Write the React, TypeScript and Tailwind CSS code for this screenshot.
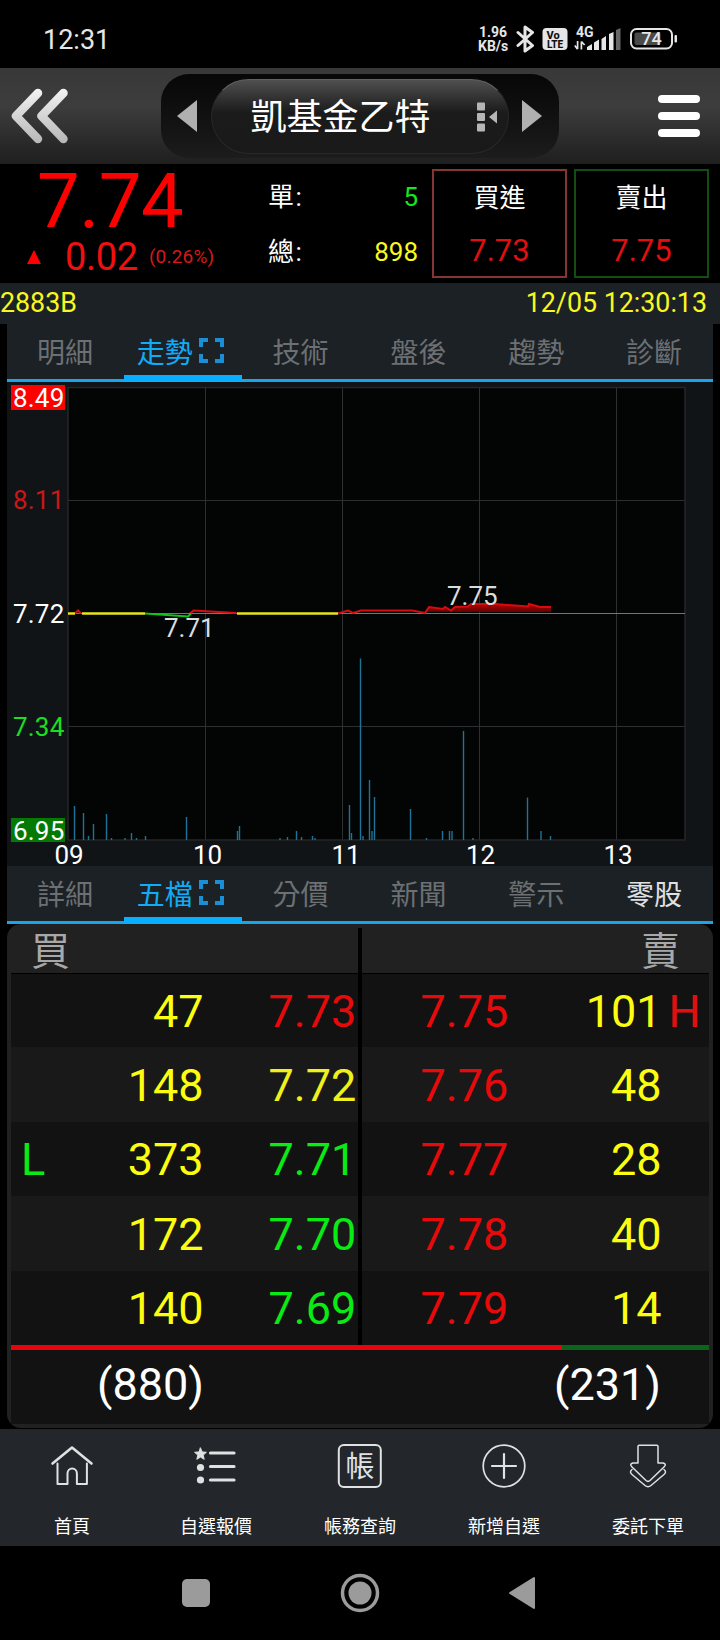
import { ReactNode } from "react";
import clsx from "clsx";

type Level = {
  height: string;
  bidQty: number;
  bid: string;
  bidColor: string;
  askQty: number;
  ask: string;
  low?: boolean;
  high?: boolean;
};

const levels: Level[] = [
  { height: "h-[73px]", bidQty: 47, bid: "7.73", bidColor: "text-[#e80a0a]", askQty: 101, ask: "7.75", high: true },
  { height: "h-[75px]", bidQty: 148, bid: "7.72", bidColor: "text-[#f0f01c]", askQty: 48, ask: "7.76" },
  { height: "h-[74px]", bidQty: 373, bid: "7.71", bidColor: "text-[#0aea14]", askQty: 28, ask: "7.77", low: true },
  { height: "h-[75px]", bidQty: 172, bid: "7.70", bidColor: "text-[#0aea14]", askQty: 40, ask: "7.78" },
  { height: "h-[74px]", bidQty: 140, bid: "7.69", bidColor: "text-[#0aea14]", askQty: 14, ask: "7.79" },
];

// [x, top] of each volume bar, the base line is at 458
const volumes = [
  [67.5, 424], [76.5, 431], [81.5, 454], [86.5, 442], [99.5, 432], [104.5, 456], [118, 456],
  [124.5, 451], [129.5, 456], [138.5, 454], [179.5, 435], [230.5, 449], [232.5, 444],
  [273, 456], [280.5, 455], [289.5, 449], [294.5, 455], [305.5, 454], [308, 456],
  [342.5, 423], [344.5, 451], [353.5, 276.5], [356, 454], [362.5, 398], [365, 449],
  [367.5, 415], [403.5, 427], [419.5, 456], [435.5, 449], [442.5, 449], [445, 449],
  [456.5, 349], [466, 456], [520.5, 415.5], [534, 449], [543.5, 454],
];

const gridX = [198.5, 335.5, 472.5, 609.5];
const gridY = [118.5, 344.5];
const hours = [
  { label: "09", x: 62 },
  { label: "10", x: 200.5 },
  { label: "11", x: 339 },
  { label: "12", x: 473.5 },
  { label: "13", x: 611 },
];

function StatusBar() {
  return (
    <div className="flex h-[68px] justify-between bg-black pl-[43px] pr-[42px] pt-[25px] text-[#e6e6e6]">
      <span className="h-[30px] text-[27px] leading-[30px]">12:31</span>
      <div className="flex">
        <div className="-ml-px w-[30px] whitespace-nowrap text-center text-[14px] font-bold leading-[14px]">
          <div>1.96</div>
          <div>KB/s</div>
        </div>
        <svg className="ml-[8px]" width="20" height="28" viewBox="0 0 20 28" fill="none" stroke="currentColor" strokeWidth="3" strokeLinejoin="round" strokeLinecap="round">
          <path d="M2 7.500l14.500 13-7.500 5.500V2l7.500 5.500L2 20.500" />
        </svg>
        <svg className="ml-[6px]" width="26" height="28" viewBox="0 0 26 28">
          <rect x="0.5" y="3" width="25" height="22" rx="4" fill="currentColor" />
          <text x="4.5" y="13.5" fontSize="11" fontWeight="800" fill="#111">Vo</text>
          <text x="5" y="22.5" fontSize="10" fontWeight="800" fill="#111">LTE</text>
        </svg>
        <svg className="ml-[6px]" width="50" height="28" viewBox="0 0 50 28" fill="currentColor">
          <text x="2" y="12" fontSize="14" fontWeight="700">4G</text>
          <path d="M3.6 16v8M0.8 20.5l2.8 3.8M7.4 24.5v-8M10.6 20l-3.2-3.5" stroke="currentColor" strokeWidth="1.7" />
          <path d="M13 25v-3l5-3v6zM20 25v-7.500l5-3V25zM27.500 25V14l4.500-3v14zM35 25V9l4.500-2v18z" />
          <path d="M42 25V5l4.500-2v22z" fill="#666" />
        </svg>
        <svg className="ml-[6px]" width="48" height="28" viewBox="0 0 48 28">
          <rect x="1" y="4" width="41" height="19.500" rx="5.500" fill="none" stroke="currentColor" strokeWidth="2" />
          <rect x="4.500" y="7.500" width="26" height="12.500" rx="2" fill="#4a4a4a" />
          <rect x="44.500" y="10" width="2.500" height="7.500" rx="1" fill="currentColor" />
          <text x="21.500" y="20.300" fontSize="18" fontWeight="500" textAnchor="middle" fill="currentColor">74</text>
        </svg>
      </div>
    </div>
  );
}

function Header() {
  return (
    <header className="flex h-24 items-center bg-linear-to-b from-[#383838] via-[#3d3d3d] via-40% to-[#1f1f1f] pl-[9px] pr-[20px]">
      <svg width="62" height="60" viewBox="0 0 62 60" fill="none" strokeWidth="8.500" strokeLinecap="round" strokeLinejoin="round">
        <defs>
          <linearGradient id="chevron" gradientUnits="userSpaceOnUse" x1="0" y1="4" x2="0" y2="56">
            <stop offset="0" stopColor="#f2f2f2" />
            <stop offset="1" stopColor="#b8b8b8" />
          </linearGradient>
        </defs>
        <path d="M29 7L7 30l22 23M54.500 7L32.500 30l22 23" stroke="url(#chevron)" />
      </svg>
      <div className="ml-[90px] flex h-[84px] w-[398px] items-center justify-between rounded-[28px] bg-linear-to-b from-[#070707] to-[#1c1c1c] px-4">
        <svg width="20" height="32" viewBox="0 0 20 32" fill="#b0b0b0">
          <path d="M0 16L20 0v32z" />
        </svg>
        <div className="mt-px flex h-[75px] w-[298px] items-center rounded-full border border-[#292929] border-t-[#606060] bg-linear-to-b from-[#505050] via-[#1b1b1b] via-45% to-[#191919] pl-[39px]">
          <h1 className="mt-[3px] whitespace-nowrap text-[36px] leading-[40px] text-white">凱基金乙特</h1>
          <svg className="ml-[46px]" width="21" height="30" viewBox="0 0 21 30" fill="#b5b5b5">
            <rect x="0" y="0.500" width="8" height="8" rx="1" />
            <rect x="0" y="11" width="8" height="8" rx="1" />
            <rect x="0" y="21.500" width="8" height="8" rx="1" />
            <path d="M12 15l8-6.500v13z" />
          </svg>
        </div>
        <svg className="mr-px" width="20" height="32" viewBox="0 0 20 32" fill="#b0b0b0">
          <path d="M20 16L0 0v32z" />
        </svg>
      </div>
      <div className="ml-auto flex w-[42px] flex-col gap-[9px]">
        <span className="h-2 rounded-full bg-white" />
        <span className="h-2 rounded-full bg-white" />
        <span className="h-2 rounded-full bg-white" />
      </div>
    </header>
  );
}

function TradeBox({ label, price, border }: { label: string; price: string; border: string }) {
  return (
    <button className={clsx("flex h-[109px] w-[135px] flex-col items-center border-2 pt-[10px]", border)}>
      <span className="text-[26px] leading-[34px] text-white">{label}</span>
      <span className="mt-[19px] text-[31px] leading-[34px] text-[#e01010]">{price}</span>
    </button>
  );
}

function Quote() {
  return (
    <section className="flex h-[119px] bg-black">
      <div className="w-[268px]">
        <div className="pl-[37px] text-[76px] leading-[74px] tracking-[-0.500px] text-[#fe0000]">7.74</div>
        <div className="flex items-center pl-[27px] leading-[38px] text-[#f01010]">
          <svg width="14" height="14" viewBox="0 0 14 14" fill="#fe0000">
            <path d="M7 0l7 14H0z" />
          </svg>
          <span className="ml-[24px] text-[38px] tracking-[-0.300px]">0.02</span>
          <span className="ml-[11px] text-[19px] tracking-[0.200px] text-[#d81818]">(0.26%)</span>
        </div>
      </div>
      <div className="flex w-[150px] flex-col gap-[21px] pt-[16px] text-[26px] leading-[34px]">
        <div className="flex justify-between">
          <span className="tracking-[1.500px] text-white">單:</span>
          <span className="text-[#14e81c]">5</span>
        </div>
        <div className="flex justify-between">
          <span className="tracking-[1.500px] text-white">總:</span>
          <span className="text-[#f8f820]">898</span>
        </div>
      </div>
      <div className="ml-[14px] flex gap-[7px] pt-[5px]">
        <TradeBox label="買進" price="7.73" border="border-[#863434]" />
        <TradeBox label="賣出" price="7.75" border="border-[#144c14]" />
      </div>
    </section>
  );
}

function ExpandIcon() {
  return (
    <svg width="25" height="25" viewBox="0 0 25 25" fill="none" stroke="#1b8fd6" strokeWidth="4">
      <path d="M2 9V2h7M16 2h7v7M23 16v7h-7M9 23H2v-7" />
    </svg>
  );
}

function Tabs({ items, lit }: { items: string[]; lit?: number }) {
  return (
    <div className="h-[58px] border-b-[3px] border-[#18a5ec] bg-[#1c2125]">
      <div className="-ml-px grid h-[58px] grid-cols-6">
        {items.map((item, i) => (
          <div
            key={item}
            className={clsx(
              "flex items-start justify-center whitespace-nowrap pt-[12px] text-[28px] leading-[36px]",
              i === 1 ? "border-b-[7px] border-[#08aeff] pr-[5px] text-[#10acf8]" : i === lit ? "text-[#e0e0e0]" : "text-[#6c7073]"
            )}
          >
            {item}
            {i === 1 && (
              <span className="ml-[6px] mt-[2px]">
                <ExpandIcon />
              </span>
            )}
          </div>
        ))}
      </div>
    </div>
  );
}

function TrendChart() {
  return (
    <svg className="block overflow-visible bg-[#101417]" width="706" height="484" viewBox="0 0 706 484" fontSize="26">
      <defs>
        <linearGradient id="area" x1="0" y1="0" x2="0" y2="1">
          <stop offset="0" stopColor="#b80000" />
          <stop offset="1" stopColor="#4a0000" />
        </linearGradient>
      </defs>
      <rect x="61" y="5" width="617" height="453.500" fill="#030505" />
      <g stroke="#2d2f30">
        {gridX.map((x) => (
          <path key={x} d={`M${x} 5V458`} />
        ))}
        {gridY.map((y) => (
          <path key={y} d={`M61 ${y}H678`} />
        ))}
      </g>
      <rect x="61" y="5.500" width="617" height="452.500" fill="none" stroke="#242627" strokeWidth="1.500" />
      <path d="M61 231.500H678" stroke="#4f8199" />
      <g stroke="#1f7399" strokeWidth="1.400">
        {volumes.map(([x, y]) => (
          <path key={x} d={`M${x} ${y}V458`} />
        ))}
      </g>

      <path d="M418 231.500l4-6 14 2 2-2 6 3.500 4-3.500 13-0.500 3-2.500h24l33 2.500 1-2.500 11 3h11v4.500H418z" fill="url(#area)" />
      <g fill="none" strokeWidth="2">
        <path d="M68 231.500l3-3 3 3M183 231.500l3.500-3 43 2.500M331 231.500l10-3 5 2.500 8-2.500h51l13 2.500 4-6 14 2 2-2 6 3.500 4-3.500 13-0.500 3-2.500h24l33 2.500 1-2.500 11 3h11" stroke="#d80c10" />
        <path d="M138 231.500l43 3 3-3" stroke="#12c41a" />
        <path d="M61 231.500h7M75 231.500h63M230 231.500h101" stroke="#e8e41c" strokeWidth="2.500" />
      </g>

      <g fill="#dcdcdc">
        <text x="157" y="255">7.71</text>
        <text x="440" y="223">7.75</text>
      </g>

      <rect x="4" y="3" width="54" height="25" fill="#fe0000" />
      <rect x="4" y="436" width="54" height="24" fill="#047a04" />
      <g letterSpacing="0.200">
        <text x="6" y="25" fill="#fff">8.49</text>
        <text x="6" y="127" fill="#c81818">8.11</text>
        <text x="6" y="241" fill="#fff">7.72</text>
        <text x="6" y="354" fill="#18e020">7.34</text>
        <text x="6" y="458" fill="#fff">6.95</text>
      </g>
      {hours.map(({ label, x }) => (
        <text key={label} x={x} y="482" fill="#fff" textAnchor="middle">
          {label}
        </text>
      ))}
    </svg>
  );
}

function OrderBook() {
  return (
    <section className="mb-px h-[504px] overflow-hidden rounded-[14px] bg-[#212121] px-1 pb-1">
      <div className="flex h-[50px] items-center justify-between border-b border-black text-[39px] leading-[48px] text-[#a8a8a8]">
        <span className="w-[347px] pl-[20px] pt-[7px]">買</span>
        <span className="mt-1 h-[46px] w-1 bg-black" />
        <span className="w-[347px] pr-[29px] pt-[7px] text-right">賣</span>
      </div>
      <div className="text-[45px] leading-[60px]">
        {levels.map((level, i) => (
          <div key={level.bid} className={clsx("flex", level.height, i % 2 ? "bg-[#191919]" : "bg-[#121212]")}>
            <div className="flex w-[347px] items-center pt-[2px]">
              <span className="w-[40px] pl-[10px] text-[#0aea14]">{level.low && "L"}</span>
              <span className="w-[152.500px] text-right text-[#fdfd10]">{level.bidQty}</span>
              <span className={clsx("ml-[65px]", level.bidColor)}>{level.bid}</span>
            </div>
            <div className="w-1 bg-black" />
            <div className="flex w-[347px] items-center pl-[58.500px] pt-[2px]">
              <span className="w-[90px] text-[#e80a0a]">{level.ask}</span>
              <span className="w-[151px] text-right text-[#fdfd10]">{level.askQty}</span>
              <span className="pl-[7px] text-[#e01010]">{level.high && "H"}</span>
            </div>
          </div>
        ))}
      </div>
      <div className="flex h-[5px]">
        <span className="w-[551px] bg-[#e8040a]" />
        <span className="flex-1 bg-[#0a641a]" />
      </div>
      <div className="flex h-[74px] justify-between bg-[#121212] pl-[86px] pr-[48px] text-[45px] leading-[70px] text-white">
        <span>(880)</span>
        <span>(231)</span>
      </div>
    </section>
  );
}

function NavItem({ label, children }: { label: string; children: ReactNode }) {
  return (
    <button className="flex flex-col items-center pt-[14px] text-white">
      <svg width="46" height="46" viewBox="0 0 46 46" fill="none" stroke="#dfe1e2" strokeWidth="1.800" strokeLinejoin="round" strokeLinecap="round">
        {children}
      </svg>
      <span className="mt-[25px] text-[18px] leading-[26px]">{label}</span>
    </button>
  );
}

function BottomNav() {
  return (
    <nav className="grid h-[117px] grid-cols-5 bg-[#23272b]">
      <NavItem label="首頁">
        <path d="M3.500 20.500L23 4.500l19.500 16" strokeWidth="2.600" />
        <path d="M8.500 20.500v20.500h10v-10.500a4.700 5 0 0 1 9.400 0V41h10V20.500" strokeWidth="2" />
      </NavItem>
      <NavItem label="自選報價">
        <path d="M7.500 5l1.700 3.900 4.200 0.400-3.200 2.800 1 4.200-3.700-2.200-3.700 2.200 1-4.200-3.200-2.800 4.200-0.400z" fill="#dfe1e2" stroke="#dfe1e2" strokeWidth="1" />
        <circle cx="7.500" cy="24.500" r="3.600" fill="#dfe1e2" stroke="none" />
        <circle cx="7.500" cy="37" r="3.600" fill="#dfe1e2" stroke="none" />
        <path d="M17.500 10h23.500M17.500 23.500h23.500M17.500 37h23.500" strokeWidth="3.200" />
      </NavItem>
      <NavItem label="帳務查詢">
        <rect x="1.800" y="2" width="42" height="42" rx="5" strokeWidth="2" />
        <text x="23" y="33.500" fontSize="29" textAnchor="middle" fill="#dfe1e2" stroke="none">帳</text>
      </NavItem>
      <NavItem label="新增自選">
        <circle cx="23" cy="23" r="20.800" strokeWidth="1.700" />
        <path d="M11 23h24M23 11v24" strokeWidth="2.200" />
      </NavItem>
      <NavItem label="委託下單">
        <path d="M13 20V3.500q0-1.200 1.200-1.200h17.600q1.200 0 1.200 1.200V20h5q4 1 1 4L25 37.500q-2 1.700-4 0L7 24q-3-3 1-4z" strokeWidth="1.500" />
        <path d="M7 26.500q-3 2.500 0 5L20 42.500q3 2.500 6 0l13-11q3-2.500 0-5" strokeWidth="1.500" />
      </NavItem>
    </nav>
  );
}

function SystemNav() {
  return (
    <div className="flex h-[94px] items-center bg-black pl-[182px]">
      <span className="size-[28px] rounded-[5px] bg-[#9b9b9b]" />
      <svg className="ml-[130px]" width="40" height="40" viewBox="0 0 40 40">
        <circle cx="20" cy="20" r="17.500" fill="none" stroke="#9b9b9b" strokeWidth="3.500" />
        <circle cx="20" cy="20" r="11.500" fill="#9b9b9b" />
      </svg>
      <svg className="ml-[128px]" width="28" height="34" viewBox="0 0 28 34" fill="#9b9b9b" stroke="#9b9b9b" strokeWidth="2" strokeLinejoin="round">
        <path d="M2 17L26 2v30z" />
      </svg>
    </div>
  );
}

export default function App() {
  return (
    <div className="h-[1640px] w-[720px] overflow-hidden bg-black font-['Roboto','Noto_Sans_CJK_TC',sans-serif]">
      <StatusBar />
      <Header />
      <Quote />
      <div className="flex h-[41px] justify-between bg-[#1c2125] pr-[13px] text-[26.800px] leading-[40px] text-[#f8f820]">
        <span>2883B</span>
        <span>12/05 12:30:13</span>
      </div>
      <main className="px-[7px]">
        <Tabs items={["明細", "走勢", "技術", "盤後", "趨勢", "診斷"]} />
        <TrendChart />
        <Tabs items={["詳細", "五檔", "分價", "新聞", "警示", "零股"]} lit={5} />
        <OrderBook />
      </main>
      <BottomNav />
      <SystemNav />
    </div>
  );
}
